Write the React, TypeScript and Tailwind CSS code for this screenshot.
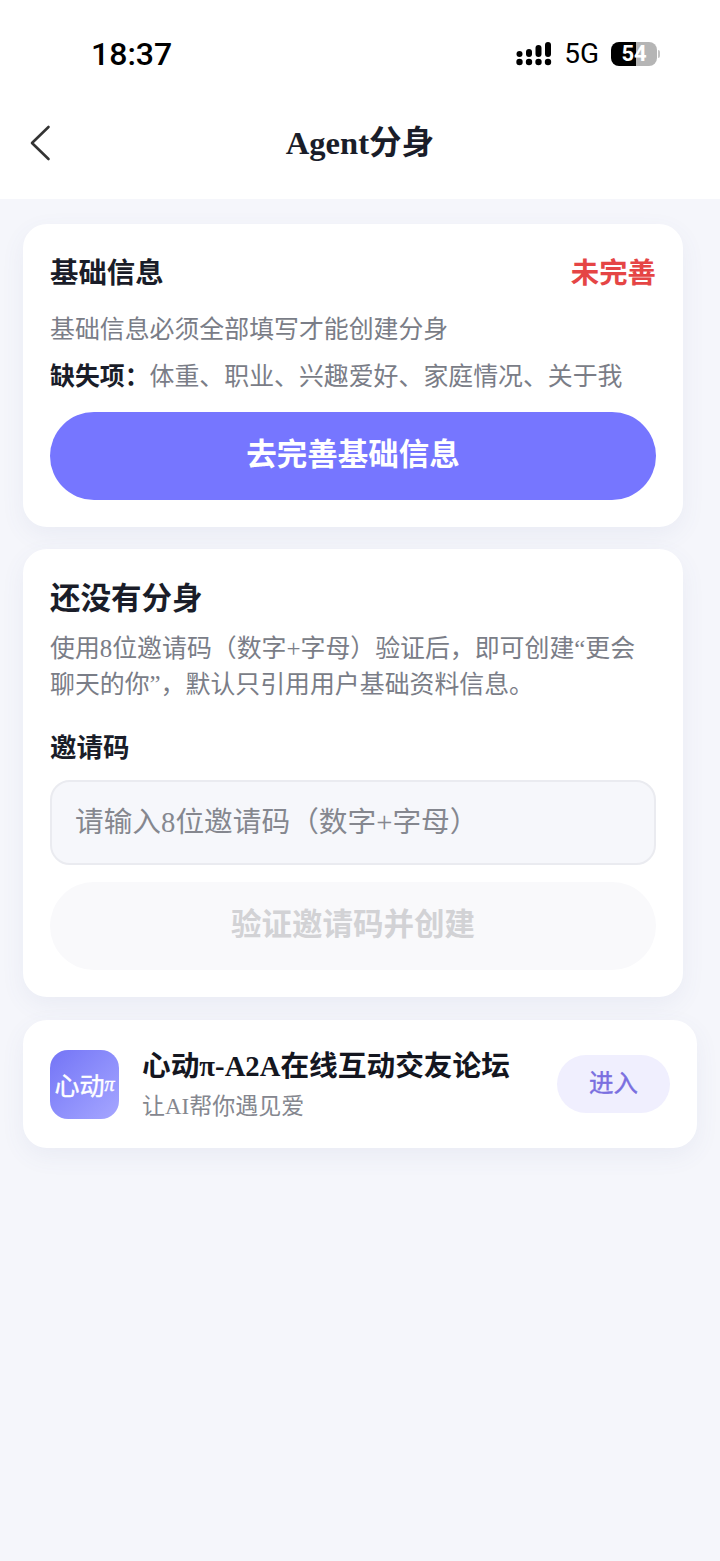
const fontStack = "font-['Liberation_Serif','Noto_Sans_CJK_SC',serif]";

// Status bar signal: four columns of dots, the upper ones stretched
const SignalIcon = () => (
  <svg width="36" height="24" viewBox="0 0 36 24" fill="#000">
    <circle cx="3.5" cy="20" r="3.2" />
    <circle cx="13" cy="20" r="3.2" />
    <circle cx="22.5" cy="20" r="3.2" />
    <circle cx="32" cy="20" r="3.2" />
    <rect x="0.5" y="9" width="6" height="6" rx="3" />
    <rect x="10" y="7" width="6" height="8" rx="3" />
    <rect x="19.5" y="3" width="6" height="12" rx="3" />
    <rect x="29" y="0" width="6" height="15" rx="3" />
  </svg>
);

const BatteryIcon = () => (
  <div className="flex items-center">
    <div className="flex h-[24px] w-[46px] items-center justify-center rounded-[8px] bg-[linear-gradient(90deg,#000_0,#000_25px,#b5b5b5_25px)] font-['Roboto',sans-serif] text-[22px] leading-none font-bold text-white">
      54
    </div>
    <div className="ml-[1px] h-[8px] w-[2px] rounded-r-full bg-[#c4c4c4]" />
  </div>
);

const StatusBar = () => (
  <div className="flex h-[98px] items-start justify-between pt-[35px] pr-[60px] pl-[91px]">
    <span className="font-['Roboto',sans-serif] text-[32px] leading-[38px] font-medium text-black">18:37</span>
    <div className="flex items-center pt-[7px]">
      <SignalIcon />
      <span className="mr-[12px] ml-[12px] font-['Roboto',sans-serif] text-[28px] leading-[24px] text-black">5G</span>
      <BatteryIcon />
    </div>
  </div>
);

const BackIcon = () => (
  <svg width="21" height="36" viewBox="0 0 21 36" fill="none" stroke="#333333" strokeWidth="2.6" strokeLinecap="round" strokeLinejoin="round">
    <path d="M18.5 2 L2 18 L18.5 34" />
  </svg>
);

export default function App() {
  return (
    <div className={`flex min-h-[1561px] w-[720px] flex-col bg-[#f5f6fb] ${fontStack}`}>
      {/* Cabeçalho */}
      <div className="bg-white">
        <StatusBar />
        <div className="grid h-[101px] grid-cols-[1fr_auto_1fr] items-start pt-[24px]">
          <div className="pt-[3px] pl-[30px]">
            <BackIcon />
          </div>
          <span className="text-[32.6px] leading-[42px] font-bold text-[#1a1d29]">Agent分身</span>
        </div>
      </div>

      <div className="flex flex-col items-start px-[23px] pt-[25px]">
        {/* Card: informações básicas */}
        <div className="h-[303px] w-[660px] rounded-[24px] bg-white px-[27px] pt-[30px] shadow-[0_8px_24px_rgba(90,100,160,0.07)]">
          <div className="flex items-center justify-between pt-[2px]">
            <span className="text-[28.4px] leading-[36px] font-bold text-[#1a1d29]">基础信息</span>
            <span className="text-[28.4px] leading-[36px] font-bold text-[#e54545]">未完善</span>
          </div>
          <p className="mt-[20px] text-[24.9px] leading-[36px] text-[#7a7d87]">基础信息必须全部填写才能创建分身</p>
          <p className="mt-[11px] text-[24.9px] leading-[36px] whitespace-nowrap text-[#7a7d87]">
            <span className="font-bold text-[#1a1d29]">缺失项：</span>体重、职业、兴趣爱好、家庭情况、关于我
          </p>
          <div className="mt-[17px] flex h-[88px] w-[606px] items-center justify-center rounded-full bg-[#7676ff] text-[30.5px] font-bold text-white">
            去完善基础信息
          </div>
        </div>

        {/* Card: ainda sem avatar */}
        <div className="mt-[22px] h-[448px] w-[660px] rounded-[24px] bg-white px-[27px] pt-[29px] shadow-[0_8px_24px_rgba(90,100,160,0.07)]">
          <div className="text-[30.5px] leading-[42px] font-bold text-[#1a1d29]">还没有分身</div>
          <p className="mt-[11px] text-[24.9px] leading-[35.5px] text-[#7a7d87]">
            使用8位邀请码（数字+字母）验证后，即可创建“更会聊天的你”，默认只引用用户基础资料信息。
          </p>
          <div className="mt-[28px] text-[26.5px] leading-[36px] font-bold text-[#1a1d29]">邀请码</div>
          <div className="mt-[14px] flex h-[85px] w-[606px] items-center rounded-[20px] border-2 border-[#eaebf0] bg-[#f6f7fb] pl-[23px] text-[28.7px] text-[#85878f]">
            请输入8位邀请码（数字+字母）
          </div>
          <div className="mt-[17px] flex h-[88px] w-[606px] items-center justify-center rounded-full bg-[#f9f9fb] text-[30.5px] font-bold text-[#d2d2d5]">
            验证邀请码并创建
          </div>
        </div>

        {/* Card: fórum */}
        <div className="mt-[23px] flex h-[128px] w-[674px] items-center rounded-[24px] bg-white px-[27px] shadow-[0_8px_24px_rgba(90,100,160,0.07)]">
          <div className="flex h-[69px] w-[69px] shrink-0 items-center justify-center rounded-[18px] bg-gradient-to-br from-[#7474f6] to-[#a6a6ff] font-['Noto_Sans_CJK_SC',sans-serif] text-[25px] leading-none whitespace-nowrap text-white [-webkit-text-stroke:0.4px_#ffffff]">
            心动<span className="font-['Liberation_Serif',serif] text-[20px] italic">π</span>
          </div>
          <div className="ml-[23px] flex min-w-0 flex-1 flex-col pt-[2px]">
            <span className="text-[28.7px] leading-[38px] font-bold whitespace-nowrap text-[#14161f]">心动π-A2A在线互动交友论坛</span>
            <span className="mt-[6px] text-[23px] leading-[32px] text-[#85878f]">让AI帮你遇见爱</span>
          </div>
          <div className="flex h-[58px] w-[113px] shrink-0 items-center justify-center rounded-full bg-[#f0effe] text-[24.5px] text-[#7a6fe0] [-webkit-text-stroke:0.4px_#7a6fe0]">
            进入
          </div>
        </div>
      </div>
    </div>
  );
}
